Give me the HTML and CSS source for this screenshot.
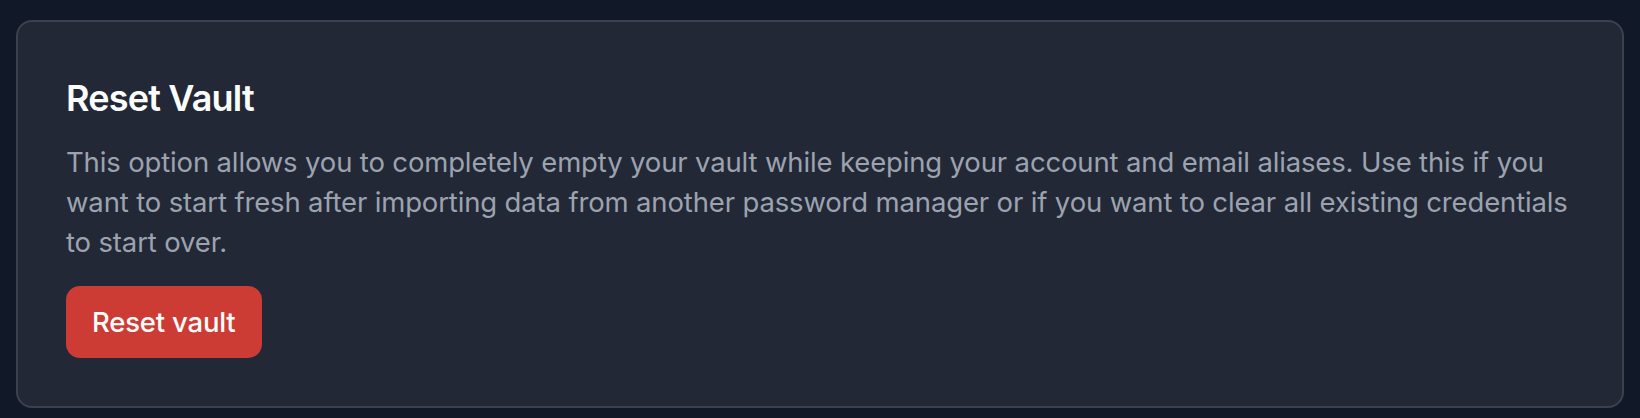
FILE: index.html
```html
<!DOCTYPE html>
<html lang="en">
<head>
  <meta charset="UTF-8">
  <meta name="viewport" content="width=device-width, initial-scale=1.0">
  <title>Reset Vault</title>
  <link rel="stylesheet" href="styles.css">
</head>
<body>
  <div class="page">
    <section class="card">
      <h2 class="card-title">Reset Vault</h2>
      <p class="card-text">This option allows you to completely empty your vault while keeping your account and email aliases. Use this if you want to start fresh after importing data from another password manager or if you want to clear all existing credentials to start over.</p>
      <button class="danger-btn">Reset vault</button>
    </section>
  </div>
</body>
</html>
```

FILE: styles.css
```css
body {
  margin: 0;
  padding: 0;
  background-color: #111827;
  font-family: Inter, "Noto Sans", sans-serif;
  -webkit-font-smoothing: antialiased;
}
.page {
  padding: 20px 16px 0 16px;
}
.card {
  background-color: #222836;
  border: 2px solid #3a4150;
  border-radius: 16px;
  padding: 48px;
}
.card-title {
  margin: 0;
  font-size: 36px;
  line-height: 56px;
  font-weight: 600;
  letter-spacing: -0.8px;
  color: #ffffff;
}
.card-text {
  margin: 16px 0 0 0;
  font-size: 27.5px;
  line-height: 40px;
  letter-spacing: -0.15px;
  color: #9ca3af;
}
.danger-btn {
  margin-top: 24px;
  height: 72px;
  padding: 0 26px;
  border: none;
  border-radius: 14px;
  background-color: #cc3c35;
  color: #ffffff;
  font-family: inherit;
  font-size: 27.5px;
  font-weight: 500;
  letter-spacing: -0.2px;
  cursor: pointer;
}
```
